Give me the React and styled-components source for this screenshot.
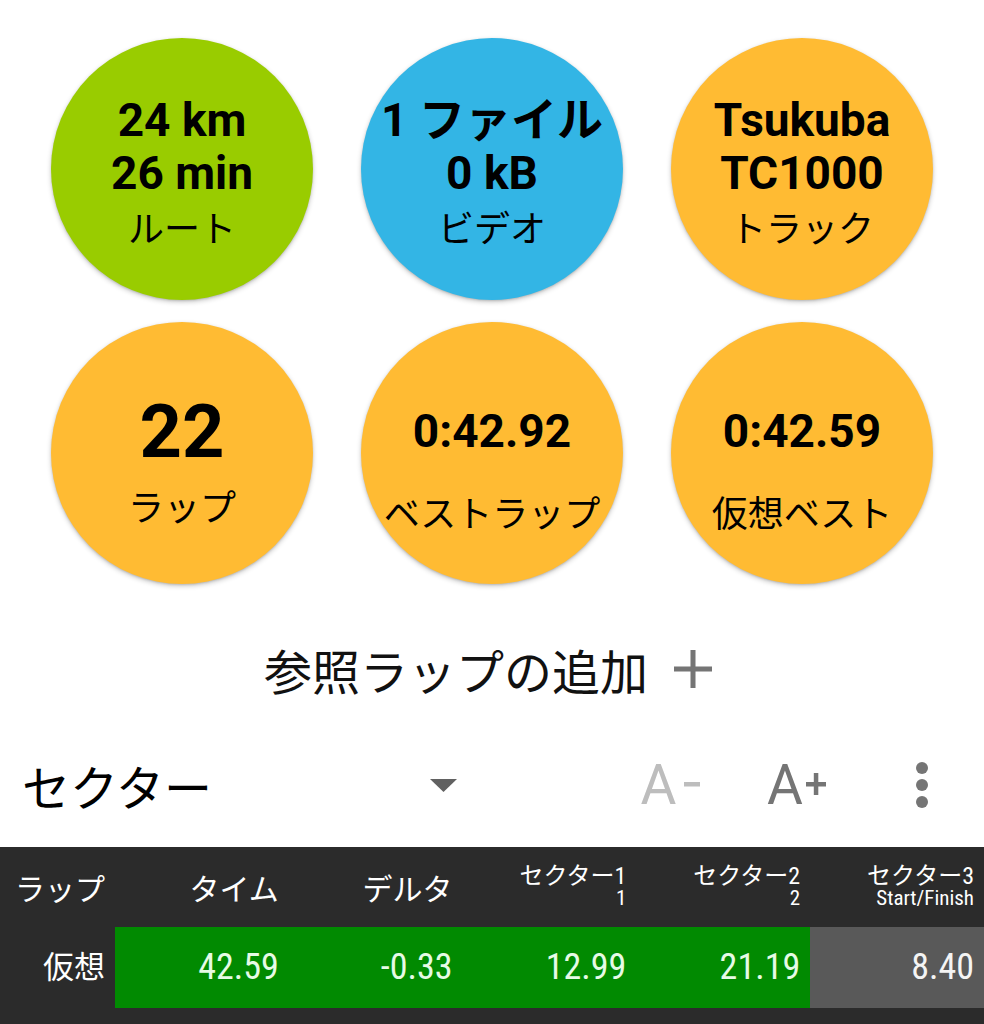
import React from "react";
import styled, { createGlobalStyle } from "styled-components";

const GlobalStyle = createGlobalStyle`
  body {
    margin: 0;
    background: #ffffff;
    font-family: Roboto, "Noto Sans CJK JP", sans-serif;
  }
`;

const Page = styled.div`
  width: 984px;
  background: #ffffff;
  overflow: hidden;
`;

const CircleGrid = styled.div`
  display: grid;
  grid-template-columns: repeat(3, 262px);
  column-gap: 48px;
  row-gap: 22px;
  justify-content: center;
  padding-top: 38px;
`;

const Circle = styled.div`
  box-sizing: border-box;
  width: 262px;
  height: 262px;
  border-radius: 50%;
  background: ${(p) => p.$color};
  box-shadow: 0 2px 5px rgba(0, 0, 0, 0.22), 0 1px 2px rgba(0, 0, 0, 0.12);
  display: flex;
  flex-direction: column;
  align-items: center;
  justify-content: center;
  padding-top: ${(p) => p.$offset || 0}px;
  text-align: center;
  white-space: nowrap;
  color: #000;
`;

const Value = styled.div`
  font-family: Roboto, "Noto Sans CJK JP", sans-serif;
  font-weight: 700;
  font-size: ${(p) => p.$size || 46}px;
  line-height: 1.15;
`;

const Label = styled.div`
  font-family: "Noto Sans CJK JP", sans-serif;
  font-size: 36px;
  line-height: 44px;
  margin-top: ${(p) => p.$gap || 0}px;
`;

const AddRow = styled.div`
  display: flex;
  justify-content: center;
  align-items: center;
  gap: 26px;
  height: 100px;
  margin-top: 35px;
  padding-right: 8px;
  font-family: "Noto Sans CJK JP", sans-serif;
  font-size: 48px;
  line-height: 1;
  color: #111;
`;

const Toolbar = styled.div`
  box-sizing: border-box;
  display: grid;
  grid-template-columns: 470px 1fr repeat(3, 125px);
  align-items: center;
  height: 128px;
  padding-top: 4px;
`;

const Spinner = styled.div`
  display: flex;
  align-items: center;
  justify-content: space-between;
  padding: 0 13px 0 22px;
`;

const SpinnerText = styled.span`
  font-family: "Noto Sans CJK JP", sans-serif;
  font-size: 48px;
  line-height: 1;
  color: #000;
`;

const IconButton = styled.div`
  display: flex;
  align-items: center;
  justify-content: center;
  gap: ${(p) => (p.$disabled ? 6 : 3)}px;
  color: ${(p) => (p.$disabled ? "#bdbdbd" : "#757575")};
`;

const Glyph = styled.span`
  font-family: Roboto, sans-serif;
  font-size: 55px;
  line-height: 1;
`;

const Table = styled.div`
  background: #2b2b2b;
  padding-bottom: 30px;
`;

const TableRow = styled.div`
  display: grid;
  grid-template-columns: 115px repeat(5, 1fr);
  height: ${(p) => p.$height}px;
`;

const Cell = styled.div`
  display: flex;
  flex-direction: column;
  justify-content: center;
  align-items: flex-end;
  padding-right: 10px;
  background: ${(p) => p.$bg || "transparent"};
  color: ${(p) => p.$fg || "#ffffff"};
  font-family: Roboto, "Noto Sans CJK JP", sans-serif;
  font-stretch: 80%;
  white-space: nowrap;
`;

const HeadText = styled.span`
  font-family: "Noto Sans CJK JP", sans-serif;
  font-size: 30px;
  line-height: 36px;
`;

const HeadTop = styled.span`
  font-size: 24px;
  line-height: 22px;
`;

const HeadSub = styled.span`
  font-size: 21px;
  line-height: 22px;
`;

const CellText = styled.span`
  font-size: ${(p) => p.$size || 36}px;
  font-stretch: 75%;
  line-height: 1.2;
`;

const PlusIcon = ({ size = 38, stroke = 5, color = "#757575" }) => (
  <svg width={size} height={size} viewBox="0 0 38 38">
    <rect x={19 - stroke / 2} y="0" width={stroke} height="38" fill={color} />
    <rect x="0" y={19 - stroke / 2} width="38" height={stroke} fill={color} />
  </svg>
);

const SmallSign = ({ plus }) => (
  <svg width="20" height="22" viewBox="0 0 20 22" style={{ marginTop: -3 }}>
    <rect x={plus ? 0 : 2} y="9" width={plus ? 20 : 16} height="4.5" fill="currentColor" />
    {plus && <rect x="7.8" y="0" width="4.5" height="22" fill="currentColor" />}
  </svg>
);

const DropTriangle = () => (
  <svg width="27" height="13" viewBox="0 0 27 13">
    <polygon points="0,0 27,0 13.5,13" fill="#616161" />
  </svg>
);

const Kebab = () => (
  <svg width="14" height="48" viewBox="0 0 14 48">
    <circle cx="7" cy="7" r="6" fill="#757575" />
    <circle cx="7" cy="24" r="6" fill="#757575" />
    <circle cx="7" cy="41" r="6" fill="#757575" />
  </svg>
);

const GREEN = "#99cc00";
const BLUE = "#33b5e5";
const ORANGE = "#ffbb33";

const SECTOR_GREEN = "#018a01";
const SECTOR_GREY = "#595959";
const ON_GREEN = "#e6fbe6";

const App = () => {
  return (
    <Page>
      <GlobalStyle />
      <CircleGrid>
        <Circle $color={GREEN} $offset={4}>
          <Value>24 km</Value>
          <Value>26 min</Value>
          <Label $gap={5}>ルート</Label>
        </Circle>
        <Circle $color={BLUE} $offset={4}>
          <Value>1 ファイル</Value>
          <Value>0 kB</Value>
          <Label $gap={5}>ビデオ</Label>
        </Circle>
        <Circle $color={ORANGE} $offset={4}>
          <Value>Tsukuba</Value>
          <Value>TC1000</Value>
          <Label $gap={5}>トラック</Label>
        </Circle>
        <Circle $color={ORANGE} $offset={10}>
          <Value $size={74}>22</Value>
          <Label $gap={8}>ラップ</Label>
        </Circle>
        <Circle $color={ORANGE} $offset={32}>
          <Value>0:42.92</Value>
          <Label $gap={32}>ベストラップ</Label>
        </Circle>
        <Circle $color={ORANGE} $offset={32}>
          <Value>0:42.59</Value>
          <Label $gap={32}>仮想ベスト</Label>
        </Circle>
      </CircleGrid>

      <AddRow>
        <span>参照ラップの追加</span>
        <PlusIcon />
      </AddRow>

      <Toolbar>
        <Spinner>
          <SpinnerText>セクター</SpinnerText>
          <DropTriangle />
        </Spinner>
        <div />
        <IconButton $disabled>
          <Glyph>A</Glyph>
          <SmallSign />
        </IconButton>
        <IconButton>
          <Glyph>A</Glyph>
          <SmallSign plus />
        </IconButton>
        <IconButton>
          <Kebab />
        </IconButton>
      </Toolbar>

      <Table>
        <TableRow $height={80}>
          <Cell>
            <HeadText>ラップ</HeadText>
          </Cell>
          <Cell>
            <HeadText>タイム</HeadText>
          </Cell>
          <Cell>
            <HeadText>デルタ</HeadText>
          </Cell>
          <Cell>
            <HeadTop>セクター1</HeadTop>
            <HeadSub>1</HeadSub>
          </Cell>
          <Cell>
            <HeadTop>セクター2</HeadTop>
            <HeadSub>2</HeadSub>
          </Cell>
          <Cell>
            <HeadTop>セクター3</HeadTop>
            <HeadSub>Start/Finish</HeadSub>
          </Cell>
        </TableRow>
        <TableRow $height={81}>
          <Cell>
            <CellText $size={31}>仮想</CellText>
          </Cell>
          <Cell $bg={SECTOR_GREEN} $fg={ON_GREEN}>
            <CellText>42.59</CellText>
          </Cell>
          <Cell $bg={SECTOR_GREEN} $fg={ON_GREEN}>
            <CellText>-0.33</CellText>
          </Cell>
          <Cell $bg={SECTOR_GREEN} $fg={ON_GREEN}>
            <CellText>12.99</CellText>
          </Cell>
          <Cell $bg={SECTOR_GREEN} $fg={ON_GREEN}>
            <CellText>21.19</CellText>
          </Cell>
          <Cell $bg={SECTOR_GREY} $fg="#f4f4f4">
            <CellText>8.40</CellText>
          </Cell>
        </TableRow>
      </Table>
    </Page>
  );
};

export default App;
